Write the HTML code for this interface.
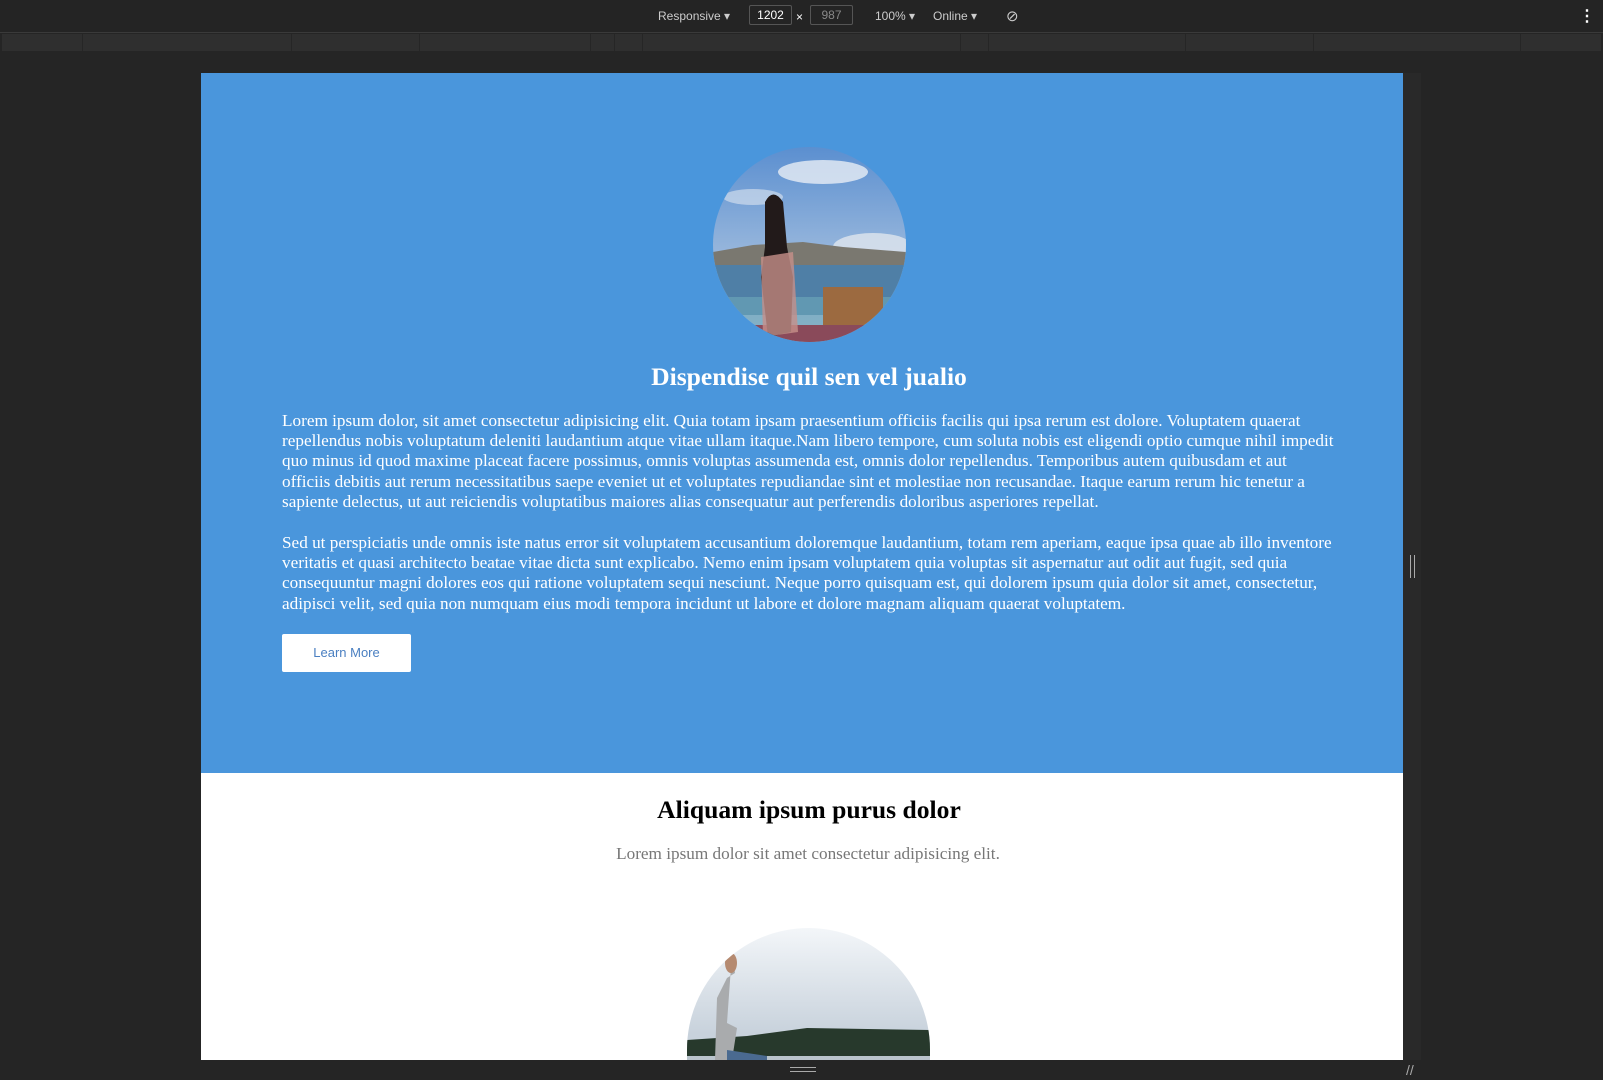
<!DOCTYPE html>
<html style="overflow:hidden"><head><meta charset="utf-8"><style>
*{margin:0;padding:0;box-sizing:border-box}
body{width:1603px;height:1080px;background:#252525;position:relative;overflow:hidden;font-family:"Liberation Serif",serif}
.top{position:absolute;left:0;top:0;width:1603px;height:33px;background:#242424;border-bottom:1px solid #3a3a3a;font-family:"Liberation Sans",sans-serif;color:#ccc;font-size:12px}
.top span{position:absolute;top:9px}
.box{position:absolute;top:5px;height:20px;border:1px solid #555;border-radius:2px;font-size:12px;text-align:center;line-height:18px}
.ruler{position:absolute;left:2px;top:34px;width:1599px;height:17px;background:#2f2f2f}
.ruler i{position:absolute;top:0;width:1px;height:17px;background:#262626}
.strip{position:absolute;left:1403px;top:73px;width:18px;height:987px;background:#292929}
.page{position:absolute;left:201px;top:73px;width:1202px;height:987px;background:#fff;overflow:hidden}
.hero{position:absolute;left:0;top:0;width:1202px;height:700px;background:#4a96dc}
.c1{position:absolute;left:512px;top:74px;width:193px;height:195px;border-radius:50%;overflow:hidden}
h1{position:absolute;left:7px;width:1202px;text-align:center;font-size:25.6px;font-weight:bold}
.p{position:absolute;left:81px;color:#fff;font-size:17.2px;line-height:20.2px;white-space:nowrap}
.btn{position:absolute;left:81px;top:561px;width:129px;height:38px;background:#fff;border-radius:2px;color:#4a7fc1;font-family:"Liberation Sans",sans-serif;font-size:13px;text-align:center;line-height:38px}
.sub{position:absolute;left:6px;width:1202px;text-align:center;top:771px;color:#777;font-size:17.2px}
.c2{position:absolute;left:486px;top:855px;width:243px;height:132px;border-radius:122px 122px 0 0;overflow:hidden}
</style></head><body>
<div class="top">
<span style="left:658px">Responsive ▾</span>
<div class="box" style="left:749px;width:43px;color:#fff">1202</div>
<span style="left:796px;top:10px;color:#fff">×</span>
<div class="box" style="left:810px;width:43px;color:#888">987</div>
<span style="left:875px">100% ▾</span>
<span style="left:933px">Online ▾</span>
<span style="left:1006px;top:7px;font-size:15px">⊘</span>
<span style="left:1579px;top:6px;font-size:16px;color:#fff;font-weight:bold">⋮</span>
</div>
<div class="ruler"><i style="left:80px"></i><i style="left:289px"></i><i style="left:417px"></i><i style="left:588px"></i><i style="left:612px"></i><i style="left:640px"></i><i style="left:958px"></i><i style="left:986px"></i><i style="left:1183px"></i><i style="left:1311px"></i><i style="left:1518px"></i></div>
<div class="strip"></div>
<div style="position:absolute;left:1410px;top:555px;width:5px;height:23px;border-left:1px solid #aaa;border-right:1px solid #aaa"></div>
<div style="position:absolute;left:790px;top:1067px;width:26px;height:5px;border-top:1px solid #aaa;border-bottom:1px solid #aaa"></div>
<div style="position:absolute;left:1406px;top:1062px;color:#aaa;font-size:14px;font-family:'Liberation Sans'">//</div>
<div class="page">
<div class="hero">
<div class="c1"><svg width="193" height="195" viewBox="0 0 193 195">
<defs><linearGradient id="sky" x1="0" y1="0" x2="0" y2="1"><stop offset="0" stop-color="#5b8fd0"/><stop offset="1" stop-color="#c9d7e6"/></linearGradient></defs>
<rect width="193" height="195" fill="url(#sky)"/>
<ellipse cx="110" cy="25" rx="45" ry="12" fill="#e8eef5" opacity=".8"/>
<ellipse cx="160" cy="100" rx="40" ry="14" fill="#e0e6ee" opacity=".8"/>
<ellipse cx="40" cy="50" rx="30" ry="8" fill="#dde6f0" opacity=".6"/>
<path d="M0 105 L40 98 L90 95 L130 100 L193 105 L193 120 L0 120Z" fill="#7a7870"/>
<rect y="118" width="193" height="50" fill="#4f7fa6"/>
<rect y="150" width="193" height="45" fill="#6aa3b8" opacity=".7"/>
<rect x="110" y="140" width="60" height="40" fill="#9c6a40"/>
<rect y="178" width="193" height="17" fill="#8a4a5a"/>
<path d="M52 55 Q60 40 70 55 L74 100 L80 130 L78 185 L55 190 L48 130 L52 100Z" fill="#221a1a"/>
<path d="M48 110 L80 105 L85 185 L50 190Z" fill="#c7908a" opacity=".8"/>
</svg></div>
<h1 style="top:289px;color:#fff">Dispendise quil sen vel jualio</h1>
<div class="p" style="top:338px">Lorem ipsum dolor, sit amet consectetur adipisicing elit. Quia totam ipsam praesentium officiis facilis qui ipsa rerum est dolore. Voluptatem quaerat<br>repellendus nobis voluptatum deleniti laudantium atque vitae ullam itaque.Nam libero tempore, cum soluta nobis est eligendi optio cumque nihil impedit<br>quo minus id quod maxime placeat facere possimus, omnis voluptas assumenda est, omnis dolor repellendus. Temporibus autem quibusdam et aut<br>officiis debitis aut rerum necessitatibus saepe eveniet ut et voluptates repudiandae sint et molestiae non recusandae. Itaque earum rerum hic tenetur a<br>sapiente delectus, ut aut reiciendis voluptatibus maiores alias consequatur aut perferendis doloribus asperiores repellat.</div>
<div class="p" style="top:460px">Sed ut perspiciatis unde omnis iste natus error sit voluptatem accusantium doloremque laudantium, totam rem aperiam, eaque ipsa quae ab illo inventore<br>veritatis et quasi architecto beatae vitae dicta sunt explicabo. Nemo enim ipsam voluptatem quia voluptas sit aspernatur aut odit aut fugit, sed quia<br>consequuntur magni dolores eos qui ratione voluptatem sequi nesciunt. Neque porro quisquam est, qui dolorem ipsum quia dolor sit amet, consectetur,<br>adipisci velit, sed quia non numquam eius modi tempora incidunt ut labore et dolore magnam aliquam quaerat voluptatem.</div>
<div class="btn">Learn More</div>
</div>
<h1 style="top:722px;color:#000">Aliquam ipsum purus dolor</h1>
<div class="sub">Lorem ipsum dolor sit amet consectetur adipisicing elit.</div>
<div class="c2"><svg width="243" height="132" viewBox="0 0 243 132">
<defs><linearGradient id="s2" x1="0" y1="0" x2="0" y2="1"><stop offset="0" stop-color="#f3f6f9"/><stop offset=".8" stop-color="#c8d2dc"/></linearGradient></defs>
<rect width="243" height="132" fill="url(#s2)"/>
<path d="M0 112 L60 108 L120 100 L243 102 L243 132 L0 132Z" fill="#27392c"/>
<rect y="128" width="243" height="4" fill="#b9c4cc"/>
<path d="M45 25 L48 45 L40 50 L30 70 L28 132 L45 132 L50 100 L40 95Z" fill="#a9abad"/>
<ellipse cx="44" cy="35" rx="6" ry="10" fill="#b58a70"/>
<path d="M40 122 L80 128 L80 132 L40 132Z" fill="#4a6a90"/>
</svg></div>
</div>
</body></html>
